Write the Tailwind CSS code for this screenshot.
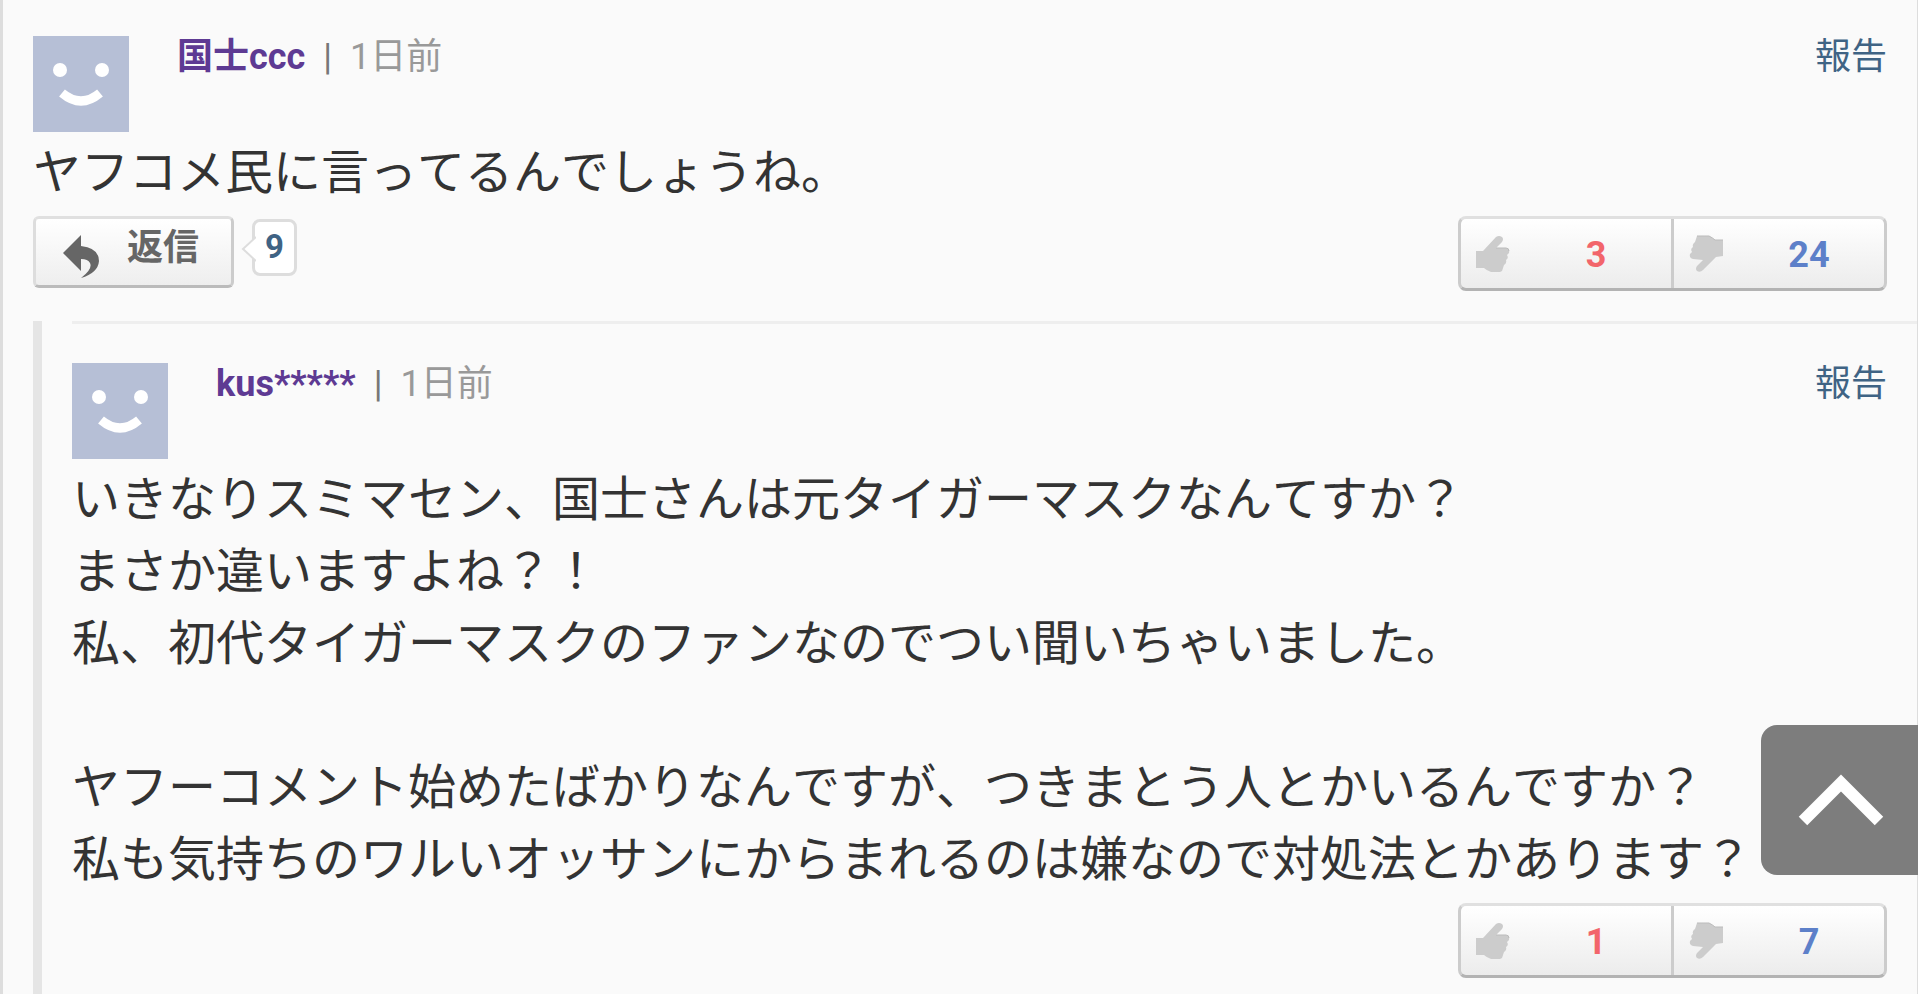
<!DOCTYPE html>
<html lang="ja">
  <head>
    <meta charset="UTF-8" />
    <meta name="viewport" content="width=device-width, initial-scale=1.0" />
    <title>コメント</title>
    <script src="https://cdn.jsdelivr.net/npm/@tailwindcss/browser@4"></script>
  </head>
  <body
    class="bg-[#fafafa] font-[Roboto,'Noto_Sans_CJK_JP',sans-serif] text-[#333]"
  >
    <!-- shared icons -->
    <svg class="hidden">
      <symbol id="face" viewBox="0 0 96 96">
        <rect width="96" height="96" fill="#b6bfd6" />
        <circle cx="27" cy="34" r="7" fill="#fff" />
        <circle cx="69" cy="34" r="7" fill="#fff" />
        <path d="M29 57Q48 73 67 57" fill="none" stroke="#fff" stroke-width="9" />
      </symbol>
      <symbol id="thumb-up" viewBox="0 0 34 38">
        <path
          d="M0 16L7 16 20 2Q23 0 26 2 28 4 26 7L20 13 30 13Q34 14 33 18L31 20Q33 23 30 25 31 28 28 30L26 36 24 37 15 37Q10 35 8 33L0 33Z"
          fill="#ccc"
        />
        <path d="M20 13L30 13Q33 13 33 16" fill="none" stroke="#bbb" />
      </symbol>
      <symbol id="thumb-down" viewBox="0 0 34 38">
        <path
          d="M34 21L27 22 14 35Q11 38 8 36 6 34 8 31L14 25 4 24Q0 23 1 19L3 17Q1 14 4 12 3 9 6 7L8 1 20 1Q24 3 26 5L34 5Z"
          fill="#ccc"
        />
        <path d="M8 1L20 1Q24 3 26 5L34 5" fill="none" stroke="#bbb" />
      </symbol>
    </svg>

    <main class="flex min-h-screen flex-col border-l-3 border-r border-[#ddd] pt-9">
      <article class="px-[30px]">
        <header class="flex items-start">
          <svg class="size-24 shrink-0"><use href="#face" /></svg>
          <div class="ml-12 flex h-[42px] flex-1 items-center text-[36px]">
            <a href="#" class="font-bold text-[#5e3a93]">国士ccc</a>
            <span class="mx-[18px] text-[#777]">|</span>
            <time class="text-[#999]">1日前</time>
          </div>
          <a href="#" class="flex h-[42px] items-center text-[36px] text-[#3f6384]">報告</a>
        </header>
        <p class="mt-[5px] text-[48px] leading-[72px] [font-kerning:none]">
          ヤフコメ民に言ってるんでしょうね。
        </p>
        <div class="mt-[7px] flex items-start">
          <button
            class="flex h-[72px] w-[201px] items-start rounded-md border-3 border-t-[#e0e0e0] border-r-[#ccc] border-b-[#bbb] border-l-[#ddd] bg-linear-to-b from-white to-[#eee] pl-[27px] text-[36px] leading-[58px] font-bold text-[#666]"
          >
            <svg class="mt-4 mr-7 h-11 w-9" viewBox="0 0 36 44">
              <path
                d="M0 18L18 0V11Q36 13 36 26 35 38 18 43 30 34 27 28 25 24 18 24V36Z"
                fill="#666"
              />
            </svg>
            返信
          </button>
          <a
            href="#"
            class="relative mt-[3px] ml-[18px] h-[57px] w-[45px] rounded-lg border-3 border-[#ddd] bg-white text-center text-[33px] leading-[50px] font-bold text-[#3f6384]"
          >
            <svg class="absolute top-[13px] -left-[14px] h-7 w-[15px]" viewBox="0 0 15 28">
              <path d="M15 2L2 14 15 26" fill="#fff" stroke="#ddd" stroke-width="2" />
            </svg>
            9
          </a>
          <div
            class="ml-auto flex h-[75px] w-[429px] rounded-lg border-3 border-t-[#e0e0e0] border-r-[#ccc] border-b-[#b3b3b3] border-l-[#ccc] bg-linear-to-b from-white to-[#ececec] text-[36px] font-bold"
          >
            <button class="flex flex-1 items-center border-r-3 border-[#ccc] pl-[15px] text-[#f2656b]">
              <svg class="h-[38px] w-[34px]"><use href="#thumb-up" /></svg>
              <span class="ml-[11px] flex-1 pt-0.5 text-center">3</span>
            </button>
            <button class="flex flex-1 items-center pl-[15px] text-[#5d80c9]">
              <svg class="h-[38px] w-[34px]"><use href="#thumb-down" /></svg>
              <span class="ml-[11px] flex-1 pt-0.5 text-center">24</span>
            </button>
          </div>
        </div>
      </article>

      <!-- replies -->
      <section class="mt-[30px] ml-[30px] grow border-l-9 border-[#e5e5e5] pb-4 pl-[30px]">
        <article class="border-t-3 border-[#eee] pt-[39px] pr-[30px]">
          <header class="flex items-start">
            <svg class="size-24 shrink-0"><use href="#face" /></svg>
            <div class="ml-12 flex h-[42px] flex-1 items-center text-[36px]">
              <a href="#" class="font-bold text-[#5e3a93]">kus*****</a>
              <span class="mx-[18px] text-[#777]">|</span>
              <time class="text-[#999]">1日前</time>
            </div>
            <a href="#" class="flex h-[42px] items-center text-[36px] text-[#3f6384]">報告</a>
          </header>
          <p class="mt-[5px] text-[48px] leading-[72px] [font-kerning:none]">
            いきなりスミマセン、国士さんは元タイガーマスクなんてすか？<br />
            まさか違いますよね？！<br />
            私、初代タイガーマスクのファンなのでつい聞いちゃいました。<br />
            <br />
            ヤフーコメント始めたばかりなんですが、つきまとう人とかいるんですか？<br />
            私も気持ちのワルいオッサンにからまれるのは嫌なので対処法とかあります？
          </p>
          <div
            class="mt-[7px] ml-auto flex h-[75px] w-[429px] rounded-lg border-3 border-t-[#e0e0e0] border-r-[#ccc] border-b-[#b3b3b3] border-l-[#ccc] bg-linear-to-b from-white to-[#ececec] text-[36px] font-bold"
          >
            <button class="flex flex-1 items-center border-r-3 border-[#ccc] pl-[15px] text-[#f2656b]">
              <svg class="h-[38px] w-[34px]"><use href="#thumb-up" /></svg>
              <span class="ml-[11px] flex-1 pt-0.5 text-center">1</span>
            </button>
            <button class="flex flex-1 items-center pl-[15px] text-[#5d80c9]">
              <svg class="h-[38px] w-[34px]"><use href="#thumb-down" /></svg>
              <span class="ml-[11px] flex-1 pt-0.5 text-center">7</span>
            </button>
          </div>
        </article>
      </section>
    </main>

    <!-- back to top -->
    <button
      aria-label="ページの先頭へ"
      class="fixed right-0 bottom-[119px] h-[150px] w-[157px] rounded-l-2xl bg-[#7d7d7d]"
    >
      <svg class="ml-[37px] h-[52px] w-[86px]" viewBox="0 0 86 52">
        <path d="M5 47L43 9 81 47" fill="none" stroke="#fff" stroke-width="12" />
      </svg>
    </button>
  </body>
</html>
